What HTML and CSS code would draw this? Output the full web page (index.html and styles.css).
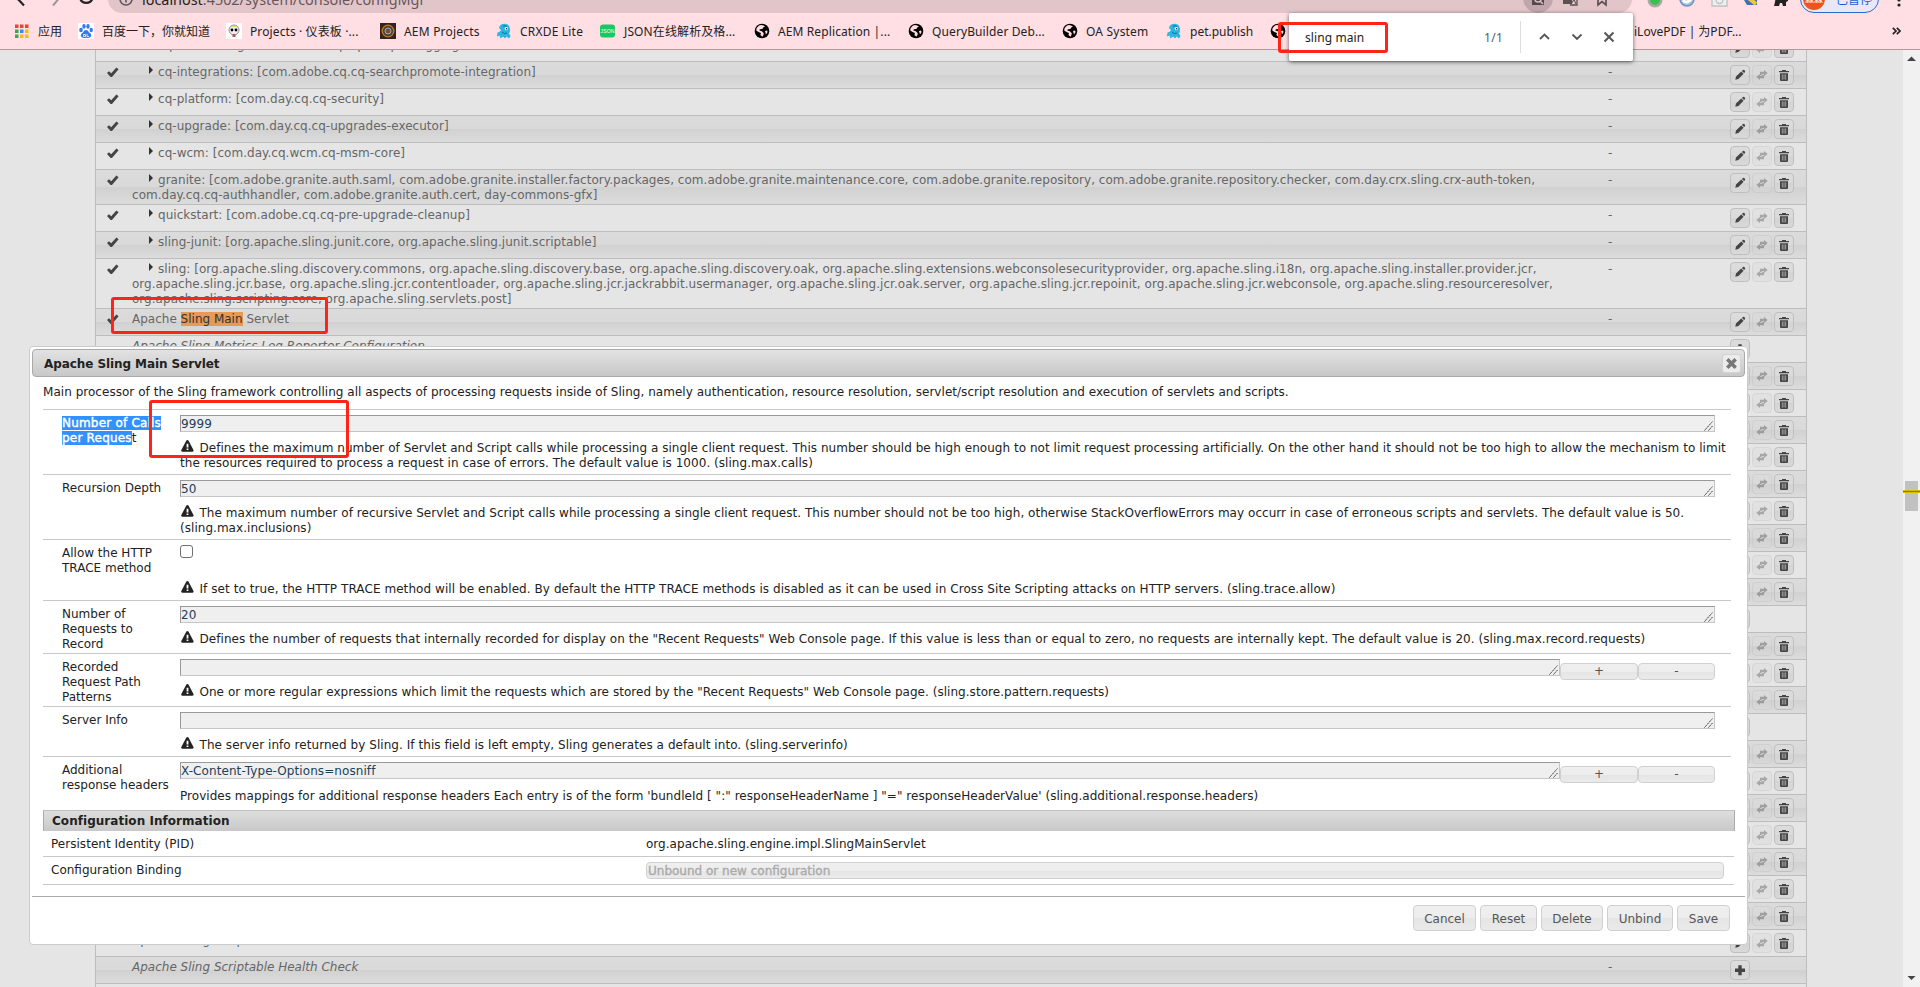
FILE: index.html
```html
<!DOCTYPE html>
<html lang="zh-CN">
<head>
<meta charset="utf-8">
<title>Configuration</title>
<link rel="stylesheet" href="styles.css">
</head>
<body>
<svg class="defs" width="0" height="0">
  <symbol id="check" viewBox="0 0 12 11"><path d="M0 6 L2 4.2 L4.2 6.2 L9.4 0.6 L11.6 2.2 L5 10 L3.6 10 Z"/></symbol>
  <symbol id="pencil" viewBox="0 0 12 12"><path d="M1.3 10.8 L2 7.6 L7.2 2.4 L9.6 4.8 L4.4 10 Z M7.9 1.9 L9 .9 Q10 .6 10.8 1.5 Q11.5 2.4 10.9 3.2 L10.1 4.1 Z"/></symbol>
  <symbol id="swap" viewBox="0 0 12 12"><path d="M4 2.8 H8 V1 L11.7 4 L8 7 V5.2 H5.6 V6 H4 Z M8 9.2 H4 V11 L.3 8 L4 5 V6.8 H6.4 V6 H8 Z"/></symbol>
  <symbol id="trash" viewBox="0 0 12 12"><path d="M1 2 H4 V1 H8 V2 H11 V3.2 H1 Z M2 4.2 H10 V11 Q10 12 9 12 H3 Q2 12 2 11 Z"/><path d="M4.3 5.4 V10.6 M6 5.4 V10.6 M7.7 5.4 V10.6" stroke="#b5b5b5" stroke-width=".8"/></symbol>
  <symbol id="plus" viewBox="0 0 12 12"><path d="M4.3 1.3 H7.7 V4.6 H11 V8 H7.7 V11.3 H4.3 V8 H1 V4.6 H4.3 Z"/></symbol>
  <symbol id="warn" viewBox="0 0 13 12"><path d="M5.2 .8 Q6.5 -.6 7.6 .8 L12.6 10.2 Q12.8 11.6 11.6 11.8 H1.2 Q0 11.6 .2 10.2 Z"/><path d="M5.6 3.8 H7.4 V7.4 H5.6 Z M5.6 8.4 H7.4 V10 H5.6 Z" fill="#fff"/></symbol>
  <symbol id="globe" viewBox="0 0 16 16"><circle cx="8" cy="8" r="7.3"/><path d="M5 2.4 Q2.5 4 2.2 7.5 L5 9.2 L7 10 L6.4 12 L8.4 13.8 Q9.8 12 9.8 10.2 L7.8 8.2 L5.4 7.6 L5.8 6.2 L8.4 6 L9.2 4.4 L11 3.6 Q8 1.2 5 2.4 Z M11 8 L13 7.4 L13.6 9 L12 11.4 Z" fill="#ffdfe4"/></symbol>
  <symbol id="fish" viewBox="0 0 16 16"><path d="M3 5 Q4 .6 9 .8 Q13.6 1 14 6 Q14.2 9 13 10.6 L14.6 13 L13 15.4 L10.6 13.6 L9 15.6 L7 13.4 L4.6 15.4 L3.4 12.6 L.8 13.4 L1.6 9.6 Q4 9 5 7 Z" fill="#2bb6e0"/><path d="M7 3.4 Q9 2 11 3.6 M6 9 Q8 11.6 11 10" stroke="#126e98" fill="none"/><circle cx="10.4" cy="5.6" r="1.6" fill="#fff"/><circle cx="10.6" cy="5.8" r=".8" fill="#124"/></symbol>
  <symbol id="grip" viewBox="0 0 9 10"><path d="M.5 9.5 L8.5 .5 M4.5 9.5 L8.5 5" stroke="#333" stroke-width="1" stroke-dasharray="1.6 .7" fill="none"/></symbol>
</svg>

<header class="chrome">
  <div class="toolbar">
    <svg class="nav" viewBox="0 0 100 14"><path d="M24 5.5 L15 -4" stroke="#222" stroke-width="2.2" fill="none"/><path d="M53 5.5 L61 -4" stroke="#999" stroke-width="2" fill="none"/><path d="M80 -2 A6.5 6.5 0 0 0 92.6 -2" stroke="#222" stroke-width="2.2" fill="none"/></svg>
    <div class="omnibox">
      <svg class="info" viewBox="0 0 14 14"><circle cx="7" cy="7" r="6" fill="none" stroke="#5f5358" stroke-width="1.6"/><path d="M7 6 V10.5 M7 3.5 V5" stroke="#5f5358" stroke-width="1.6"/></svg>
      <span class="url"><b>localhost</b>:4502/system/console/configMgr</span>
      <svg class="tools" viewBox="0 0 110 28"><circle cx="16" cy="13" r="15" fill="#c0a7ab"/><path d="M10 8 H22 V20 H10 Z" fill="#55494c"/><circle cx="16" cy="14" r="3" fill="none" stroke="#d8c0c4" stroke-width="1.5"/><path d="M18 16 L21 19" stroke="#d8c0c4" stroke-width="1.5"/><path d="M41 10 H50 V19 H41 Z" fill="#5c5053"/><path d="M49 13 H55 V20 H48" fill="none" stroke="#5c5053" stroke-width="1.3"/><path d="M49 19 L52 14.5 L54 19" fill="none" stroke="#5c5053"/><path d="M76 8 V20 L80 16.6 L84 20 V8" fill="none" stroke="#5c5053" stroke-width="1.7"/></svg>
    </div>
    <svg class="exts" viewBox="0 0 162 13"><circle cx="17" cy="0" r="7.5" fill="#a9a9a9"/><circle cx="17" cy="0" r="5" fill="#3cc24c"/><circle cx="49" cy="-1" r="7" fill="#a7bfdc" stroke="#6c94c4" stroke-width="1.5"/><path d="M45 0 Q49 5 54 -2" stroke="#fff" stroke-width="3" fill="none"/><path d="M74 -6 V6 H89 V-6" fill="#eef0ef" stroke="#bfc4c3" stroke-width="1.4"/><circle cx="81.500" cy="0" r="3.500" fill="none" stroke="#bfc4c3" stroke-width="1.4"/><path d="M106 0 H119 V5 H109 Z" fill="#3b6fc0"/><path d="M108 -4 L118 4" stroke="#f0c63c" stroke-width="4"/><path d="M138 -4 H150 V1 L148 2 V6 H145 L144 3 L142 3 L141 6 H136 L137 2 Z" fill="#222"/></svg>
    <div class="profile"><span class="avatar">淼淼</span><span>已暂停</span></div>
    <svg class="kebab" viewBox="0 0 4 13"><circle cx="2" cy="0" r="1.600"/><circle cx="2" cy="5" r="1.600"/></svg>
  </div>
  <nav class="bookmarks">
    <a class="bm w63"><svg viewBox="0 0 16 16"><g fill="#ea4335"><path d="M0 1.500h3.500v3.500H0z"/><path d="M5 1.500h3.500v3.500H5z"/><path d="M10 1.500h3.500v3.500H10z"/></g><path d="M0 6.500h3.500v3.500H0z" fill="#34a853"/><path d="M5 6.500h3.500v3.500H5z" fill="#4285f4"/><path d="M10 6.500h3.500v3.500H10z" fill="#fbbc04"/><path d="M0 11.500h3.500v3.500H0z" fill="#34a853"/><path d="M5 11.500h3.500v3.500H5zM10 11.500h3.500v3.500H10z" fill="#fbbc04"/></svg><span>应用</span></a>
    <a class="bm w148"><svg viewBox="0 0 16 16"><path d="M0 0h16v16H0z" fill="#fff"/><g fill="#2e7cf0"><ellipse cx="3" cy="7" rx="1.800" ry="2.300"/><ellipse cx="6" cy="3.400" rx="1.700" ry="2.400"/><ellipse cx="10" cy="3.400" rx="1.700" ry="2.400"/><ellipse cx="13.200" cy="7" rx="1.700" ry="2.200"/><path d="M8 7 Q10 7 11 9.400 Q14 11 13 13.600 Q12 15.600 8 14.800 Q4 15.600 3 13.600 Q2.200 11 5 9.400 Q6 7 8 7z"/></g><path d="M5.500 11.500h2v2h-2zM9 11v2.600h2" stroke="#fff" fill="none" stroke-width=".8"/></svg><span class="cjk">百度一下，你就知道</span></a>
    <a class="bm w154"><svg viewBox="0 0 16 16"><path d="M0 0h16v16H0z" fill="#fff"/><circle cx="8" cy="7" r="5" fill="#eee" stroke="#777" stroke-width=".8"/><path d="M4.500 3.500 Q8 0 11.500 3.500z" fill="#c8c91e"/><circle cx="6" cy="7" r="1.400"/><circle cx="10" cy="7" r="1.400"/><path d="M6.500 11h3v3h-3z" fill="#b55"/></svg><span>Projects · 仪表板 ·...</span></a>
    <a class="bm w116"><svg viewBox="0 0 16 16"><path d="M0 0h16v16H0z" fill="#33231c"/><circle cx="8" cy="8" r="5.800" fill="#443" stroke="#c9772b" stroke-width="1.300"/><circle cx="8" cy="8" r="3" fill="#654" stroke="#aaa" stroke-width="1"/></svg><span class="wide">AEM Projects</span></a>
    <a class="bm w104"><svg><use href="#fish"/></svg><span class="wide">CRXDE Lite</span></a>
    <a class="bm w154"><svg viewBox="0 0 16 16"><rect y="1.500" width="15" height="13" rx="3" fill="#17c964"/><text x="7.500" y="9.800" text-anchor="middle" font-size="5" fill="#fff" font-family="Liberation Sans">JSON</text></svg><span>JSON在线解析及格...</span></a>
    <a class="bm w154"><svg><use href="#globe"/></svg><span>AEM Replication |...</span></a>
    <a class="bm w154"><svg><use href="#globe"/></svg><span>QueryBuilder Deb...</span></a>
    <a class="bm w104"><svg><use href="#globe"/></svg><span class="wide">OA System</span></a>
    <a class="bm w104"><svg><use href="#fish"/></svg><span class="cjk">pet.publish</span></a>
    <a class="bm w364"><svg><use href="#globe"/></svg></a>
    <a class="bm pdf"><span class="cjk">iLovePDF | 为PDF...</span></a>
    <svg class="more" viewBox="0 0 9 8"><path d="M.8 .8 L4 4 L.8 7.200 M4.800 .8 L8 4 L4.800 7.200" fill="none" stroke="#222" stroke-width="1.700"/></svg>
  </nav>
</header>

<main class="viewport">
  <div class="page"><div class="table" id="table"></div></div>
  <div class="scroll">
    <svg viewBox="0 0 17 17"><path d="M4 11 L8.500 6.500 L13 11z" fill="#444"/></svg>
    <div class="thumb"><i></i></div>
    <svg viewBox="0 0 17 17"><path d="M4.500 6 L8.500 10 L12.500 6z" fill="#444"/></svg>
  </div>
</main>

<section class="dialog">
  <div class="dialog-title"><span>Apache Sling Main Servlet</span><button class="close"><svg viewBox="0 0 10 10"><path d="M1.200 1.200 L8.800 8.800 M8.800 1.200 L1.200 8.800" stroke="#777" stroke-width="3.200"/></svg></button></div>
  <div class="dialog-body">
    <p class="intro">Main processor of the Sling framework controlling all aspects of processing requests inside of Sling, namely authentication, resource resolution, servlet/script resolution and execution of servlets and scripts.</p>
    <div class="field h65"><label><mark>Number of Calls </mark><br><mark>per Reques</mark>t</label><div class="value">
      <div class="line"><div class="input">9999<svg><use href="#grip"/></svg></div></div>
      <p><svg><use href="#warn"/></svg>Defines the maximum number of Servlet and Script calls while processing a single client request. This number should be high enough to not limit request processing artificially. On the other hand it should not be too high to allow the mechanism to limit<br>the resources required to process a request in case of errors. The default value is 1000. (sling.max.calls)</p></div></div>
    <div class="field h65"><label>Recursion Depth</label><div class="value">
      <div class="line"><div class="input">50<svg><use href="#grip"/></svg></div></div>
      <p><svg><use href="#warn"/></svg>The maximum number of recursive Servlet and Script calls while processing a single client request. This number should not be too high, otherwise StackOverflowErrors may occurr in case of erroneous scripts and servlets. The default value is 50.<br>(sling.max.inclusions)</p></div></div>
    <div class="field h61"><label>Allow the HTTP<br>TRACE method</label><div class="value">
      <div class="line tall"><span class="checkbox"></span></div>
      <p><svg><use href="#warn"/></svg>If set to true, the HTTP TRACE method will be enabled. By default the HTTP TRACE methods is disabled as it can be used in Cross Site Scripting attacks on HTTP servers. (sling.trace.allow)</p></div></div>
    <div class="field h53"><label>Number of<br>Requests to<br>Record</label><div class="value">
      <div class="line"><div class="input">20<svg><use href="#grip"/></svg></div></div>
      <p class="loose"><svg><use href="#warn"/></svg>Defines the number of requests that internally recorded for display on the "Recent Requests" Web Console page. If this value is less than or equal to zero, no requests are internally kept. The default value is 20. (sling.max.record.requests)</p></div></div>
    <div class="field h53"><label>Recorded<br>Request Path<br>Patterns</label><div class="value">
      <div class="line list"><div class="input"><svg><use href="#grip"/></svg></div><button>+</button><button>-</button></div>
      <p><svg><use href="#warn"/></svg>One or more regular expressions which limit the requests which are stored by the "Recent Requests" Web Console page. (sling.store.pattern.requests)</p></div></div>
    <div class="field h50"><label>Server Info</label><div class="value">
      <div class="line"><div class="input"><svg><use href="#grip"/></svg></div></div>
      <p class="loose"><svg><use href="#warn"/></svg>The server info returned by Sling. If this field is left empty, Sling generates a default into. (sling.serverinfo)</p></div></div>
    <div class="field h51"><label>Additional<br>response headers</label><div class="value">
      <div class="line list"><div class="input">X-Content-Type-Options=nosniff<svg><use href="#grip"/></svg></div><button>+</button><button>-</button></div>
      <p>Provides mappings for additional response headers Each entry is of the form 'bundleId [ ":" responseHeaderName ] "=" responseHeaderValue' (sling.additional.response.headers)</p></div></div>
    <div class="info-head">Configuration Information</div>
    <div class="info-row pid"><span>Persistent Identity (PID)</span><span>org.apache.sling.engine.impl.SlingMainServlet</span></div>
    <div class="info-row binding"><span>Configuration Binding</span><span class="select">Unbound or new configuration</span></div>
  </div>
  <footer><button class="b1">Cancel</button><button class="b2">Reset</button><button class="b3">Delete</button><button class="b4">Unbind</button><button class="b5">Save</button></footer>
</section>

<div class="find"><span class="query">sling main</span><span class="count">1/1</span><i class="divider"></i><svg viewBox="0 0 100 48"><path d="M19 26 L23.500 21.500 L28 26 M51.500 21.500 L56 26 L60.500 21.500" fill="none" stroke="#555" stroke-width="1.800"/><path d="M83.500 19.500 L92.500 28.500 M92.500 19.500 L83.500 28.500" stroke="#555" stroke-width="2"/></svg></div>
<div class="outline find-outline"></div>
<div class="outline row-outline"></div>
<div class="outline calls-outline"></div>
<script src="rows.js"></script>
</body>
</html>
```
FILE: styles.css
```css
* { box-sizing: border-box; }
body { margin: 0; width: 1920px; height: 987px; overflow: hidden; position: relative; display: flex; flex-direction: column; background: #e5e5e5; font: 12px/15px "DejaVu Sans", sans-serif; color: #222; white-space: nowrap; }
.defs { position: absolute; }
p { margin: 0; }
button { font: inherit; padding: 0; }
svg { flex: none; }

.chrome { height: 50px; flex: none; background: #ffdfe4; border-bottom: 1px solid #b09a9d; font-family: "Noto Sans", "Noto Sans CJK SC", sans-serif; color: #222; }
.toolbar { height: 13px; display: flex; align-items: flex-end; overflow: hidden; }
.nav { width: 100px; height: 14px; margin-right: 8px; margin-bottom: -1px; }
.omnibox { width: 1524px; height: 28px; border-radius: 14px; background: #e2c5c9; display: flex; align-items: center; padding-left: 11px; }
.info { width: 14px; height: 14px; }
.url { margin-left: 9px; font-size: 14.4px; color: #66565a; flex: 1; }
.url b { font-weight: 400; color: #222; }
.tools { width: 110px; height: 28px; }
.exts { width: 162px; height: 13px; margin-left: 6px; }
.profile { height: 28px; width: 79px; border: 1.500px solid #2a6bd0; border-radius: 14px; background: #e9e6f5; color: #1a5fd0; font-size: 12px; display: flex; align-items: center; gap: 11px; white-space: nowrap; }
.avatar { width: 22px; height: 22px; margin-left: 2px; border-radius: 50%; background: #f4511e; color: #fff; font-size: 9px; line-height: 22px; text-align: center; }
.kebab { width: 4px; height: 13px; margin-left: 18px; fill: #222; }
.bookmarks { height: 36px; padding-left: 15px; display: flex; align-items: center; }
.bm { display: flex; align-items: center; gap: 8px; flex: none; height: 18px; letter-spacing: .11px; }
.bm .cjk { letter-spacing: 0; }
.bm .wide { letter-spacing: .2px; }
.bm svg { width: 16px; height: 16px; }
.w63 { width: 63px; gap: 7px; }
.w104 { width: 104px; }
.w116 { width: 116px; }
.w148 { width: 148px; }
.w154 { width: 154px; }
.w364 { width: 364px; }
.pdf { width: 258px; }
.more { width: 9px; height: 8px; }

.viewport { flex: 1; display: flex; overflow: hidden; min-height: 0; }
.page { flex: 1; overflow: hidden; }
.table { width: 1712px; margin: -16px 0 0 95px; border: solid #bdbdbd; border-width: 0 1px; color: #666; }
.row { border-top: 1px solid #bdbdbd; padding: 2px 11px 0 11px; height: 27px; display: flex; align-items: flex-start; }
.row.lines2 { height: 35px; }
.row.lines3 { height: 50px; }
.row.even { background: linear-gradient(#dbdbdb, #d9d9d9 50%, #d1d1d1 51%, #dcdcdc); }
.state { width: 25px; height: 18px; padding-top: 3px; }
.state svg { width: 12px; height: 11px; fill: #444; display: block; }
.name { width: 1476px; padding-top: 1px; }
.bundle { width: 122px; padding-top: 1px; }
.plugin { letter-spacing: .03px; }
.plugin::before { content: ""; display: inline-block; margin: 0 5px 2px 17px; border-left: 4px solid #333; border-top: 4px solid transparent; border-bottom: 4px solid transparent; }
.row.factory .name { font-style: italic; }
.found { background: #e69a55; color: #333; }
.actions { display: flex; gap: 2px; padding-top: 1px; }
.actions span { width: 20px; height: 20px; border: 1px solid #bfbfbf; border-radius: 4px; background: linear-gradient(#dcdcdc, #dadada 50%, #d3d3d3 51%, #d9d9d9); display: flex; align-items: center; justify-content: center; }
.actions svg { width: 12px; height: 12px; fill: #444; }
.actions .off { opacity: .38; }

.scroll { width: 17px; background: #f1f1f1; display: flex; flex-direction: column; }
.scroll svg { width: 17px; height: 17px; }
.scroll svg:last-child { margin-top: auto; }
.thumb { width: 13px; height: 30px; margin: 414px 2px 0; padding-top: 9px; background: #c1c1c1; }
.thumb i { display: block; width: 17px; height: 3px; margin-left: -2px; border: solid #d9bc00; border-width: 1px 0; background: #8e7a00; }

.dialog { position: absolute; left: 29px; top: 346px; width: 1719px; height: 599px; padding: 2px; border: 1px solid #ccc; border-radius: 4px; background: #fff; display: flex; flex-direction: column; }
.dialog-title { height: 28px; border: 1px solid #aaa; border-radius: 4px; background: linear-gradient(#e2e2e2, #c8c8c8); display: flex; align-items: center; justify-content: space-between; padding: 0 3px 0 11px; font-weight: 700; letter-spacing: -.08px; }
.dialog-title span { padding-top: 2px; }
.close { width: 19px; height: 19px; border: 1px solid #d3d3d3; border-radius: 3px; background: #ececec; display: grid; place-items: center; }
.close svg { width: 11px; height: 11px; }
.dialog-body { padding: 8px 10px 0 11px; height: 519px; flex: none; }
.intro { height: 24px; letter-spacing: .033px; }
.field { width: 1688px; border-top: 1px solid #c9c9c9; display: flex; padding: 5px 0 0 19px; }
.h65 { height: 65px; }
.h61 { height: 61px; }
.h53 { height: 53px; }
.h50 { height: 50px; }
.h51 { height: 51px; }
.field label { width: 118px; padding-top: 1px; }
mark { background: #3390ff; color: #fff; -webkit-text-stroke: .4px #fff; letter-spacing: .2px; }
.line { height: 25px; display: flex; width: 1535px; }
.line.tall { height: 36px; }
.h51 .line { height: 27px; }
.input { flex: 1; height: 17px; border: 1px solid #c6c6c6; border-top-color: #999; border-left-color: #999; background: #efefef; color: #1c4158; display: flex; justify-content: space-between; align-items: center; padding: 1px 1px 0 0; letter-spacing: .08px; }
.input svg { width: 9px; height: 10px; margin: 3px 0 0 auto; }
.list button { height: 17px; width: 77px; margin-top: 4px; }
.list button:nth-child(2) { width: 78px; }
.field p { letter-spacing: .037px; }
.field p.loose { letter-spacing: .052px; }
.h61 p { letter-spacing: .067px; }
.field p svg { width: 13px; height: 12px; margin: 0 5.500px 0 1px; vertical-align: 0; fill: #222; }
.checkbox { width: 13px; height: 13px; border: 1px solid #707070; border-radius: 3px; background: #fff; }
.list button, .select, footer button { border: 1px solid #d0d0d0; border-radius: 4px; background: linear-gradient(#efefef, #ededed 50%, #e5e5e5 51%, #eaeaea); color: #555; }
.info-head { height: 21px; margin-top: 3px; border: solid #aaa; border-width: 1px 1px 0; border-top-color: #c0c0c0; background: linear-gradient(#dedede, #c8c8c8); font-weight: 700; padding: 3px 8px 2px; letter-spacing: .04px; }
.info-row { width: 1691px; border-bottom: 1px solid #c9c9c9; padding-left: 8px; display: flex; align-items: center; }
.info-row > :first-child { width: 595px; }
.pid { height: 26px; padding-top: 1px; letter-spacing: .03px; }
.binding { height: 28px; }
.select { width: 1078px; height: 17px; line-height: 16px; color: #aaa; padding-left: 1px; -webkit-text-stroke: .35px #aaa; }
footer { border-top: 1px solid #aaa; display: flex; justify-content: flex-end; gap: 4px; padding: 8px 15px 0 0; flex: 1; }
footer button { height: 26px; padding-top: 2px; }
.b1 { width: 63px; }
.b2 { width: 57px; }
.b3 { width: 62px; }
.b4 { width: 66px; }
.b5 { width: 53px; }

.find { position: absolute; left: 1289px; top: 13px; width: 344px; height: 48px; background: #fff; border-radius: 2px; box-shadow: 0 1px 4px rgba(0,0,0,.6); display: flex; align-items: center; font-family: "Noto Sans", sans-serif; padding-left: 16px; }
.query { width: 179px; padding-top: 1px; letter-spacing: .1px; }
.count { width: 36px; color: #5b5b5b; letter-spacing: .3px; }
.divider { width: 1px; height: 32px; background: #ddd; }
.find svg { width: 100px; height: 48px; }
.outline { position: absolute; border: 3px solid #ff2416; border-radius: 3px; }
.find-outline { left: 1278px; top: 22px; width: 110px; height: 31px; }
.row-outline { left: 111px; top: 297px; width: 217px; height: 37px; }
.calls-outline { left: 149px; top: 400px; width: 200px; height: 58px; }
```
FILE: rows.js
```js
const member = (name, lines) => ({ name, lines: lines || 1, kind: "member" });
const rows = [
  member("cq-dam-config: [com.adobe.cq.cq-compat-logging]"),
  member("cq-integrations: [com.adobe.cq.cq-searchpromote-integration]"),
  member("cq-platform: [com.day.cq.cq-security]"),
  member("cq-upgrade: [com.day.cq.cq-upgrades-executor]"),
  member("cq-wcm: [com.day.cq.wcm.cq-msm-core]"),
  member("granite: [com.adobe.granite.auth.saml, com.adobe.granite.installer.factory.packages, com.adobe.granite.maintenance.core, com.adobe.granite.repository, com.adobe.granite.repository.checker, com.day.crx.sling.crx-auth-token,<br>com.day.cq.cq-authhandler, com.adobe.granite.auth.cert, day-commons-gfx]", 2),
  member("quickstart: [com.adobe.cq.cq-pre-upgrade-cleanup]"),
  member("sling-junit: [org.apache.sling.junit.core, org.apache.sling.junit.scriptable]"),
  member("sling: [org.apache.sling.discovery.commons, org.apache.sling.discovery.base, org.apache.sling.discovery.oak, org.apache.sling.extensions.webconsolesecurityprovider, org.apache.sling.i18n, org.apache.sling.installer.provider.jcr,<br>org.apache.sling.jcr.base, org.apache.sling.jcr.contentloader, org.apache.sling.jcr.jackrabbit.usermanager, org.apache.sling.jcr.oak.server, org.apache.sling.jcr.repoinit, org.apache.sling.jcr.webconsole, org.apache.sling.resourceresolver,<br>org.apache.sling.scripting.core, org.apache.sling.servlets.post]", 3),
  { name: 'Apache <span class="found">Sling Main</span> Servlet', lines: 1, kind: "plain" },
  { name: "Apache Sling Metrics Log Reporter Configuration", lines: 1, kind: "factory" }
];
for (let i = 0; i < 22; i++) {
  rows.push({ name: i === 21 ? "Apache Sling Script Cache" : "", lines: 1, kind: i === 9 || i === 13 ? "factory" : "plain" });
}
rows.push({ name: "Apache Sling Scriptable Health Check", lines: 1, kind: "factory" });
rows.push({ name: "", lines: 1, kind: "factory" });

const icon = (id, cls) => `<span class="${cls || ""}"><svg><use href="#${id}"/></svg></span>`;
document.getElementById("table").innerHTML = rows.map((r, i) => {
  const factory = r.kind === "factory";
  const actions = factory ? icon("plus") : icon("pencil") + icon("swap", "off") + icon("trash");
  const check = !factory && r.name && i < 10 ? '<svg><use href="#check"/></svg>' : "";
  const bundle = i < 10 || i === rows.length - 2 ? "-" : "";
  return `<div class="row lines${r.lines} ${i % 2 ? "even" : ""} ${r.kind}">
    <div class="state">${check}</div><div class="name"><span class="${r.kind === "member" ? "plugin" : ""}">${r.name}</span></div>
    <div class="bundle">${bundle}</div><div class="actions">${actions}</div></div>`;
}).join("");
```
